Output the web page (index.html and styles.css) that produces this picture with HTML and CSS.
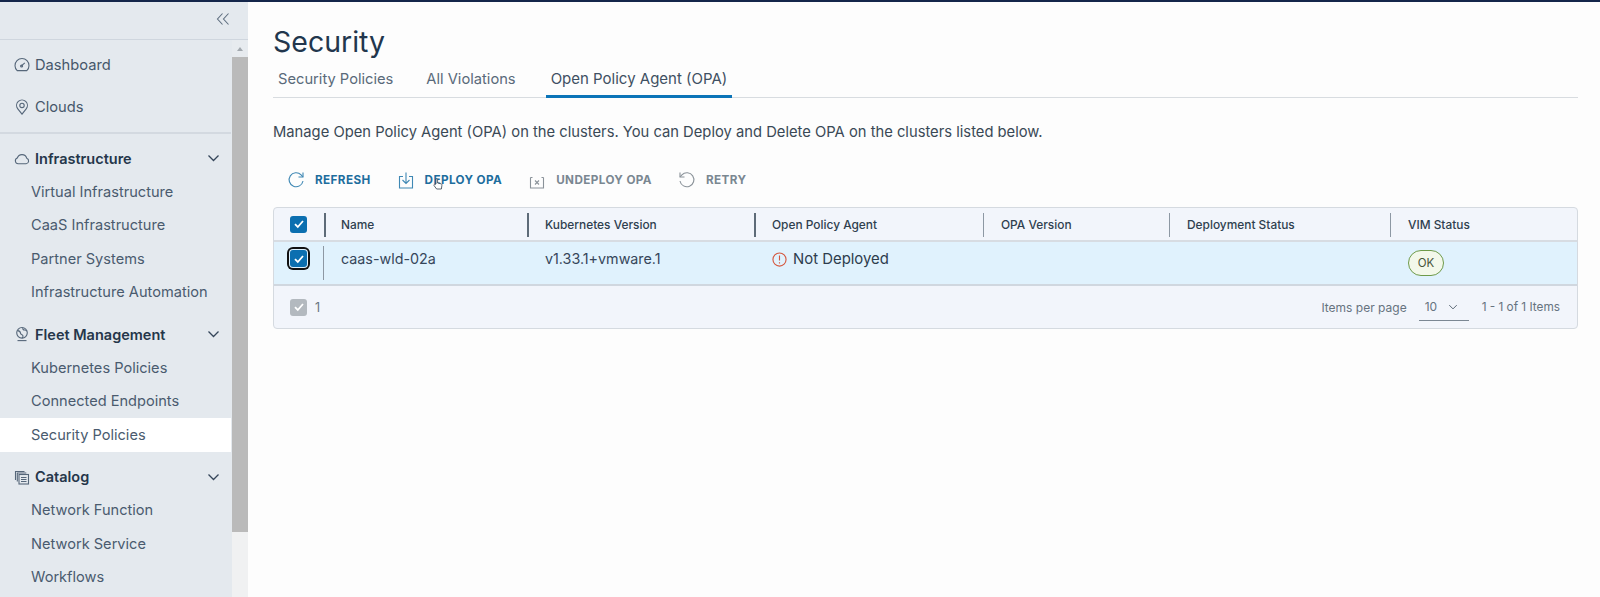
FILE: index.html
```html
<!DOCTYPE html>
<html lang="en">
<head>
<meta charset="utf-8">
<title>Security</title>
<link rel="stylesheet" href="styles.css">
</head>
<body>
<div class="app">
  <aside class="sidebar">
    <div class="collapse">
      <svg class="ic-collapse" viewBox="0 0 14 14"><path d="M6.5 1.5 1.5 7l5 5.5M12.5 1.5 7.5 7l5 5.5"/></svg>
    </div>
    <div class="nav-wrap">
      <nav class="nav">
        <div class="group top">
          <div class="item"><svg class="ic" viewBox="0 0 16 16"><path d="M3.2 13.6a7 7 0 1 1 9.6 0z"/><path d="M6.8 9.4 10.8 5.800"/><circle cx="7.6" cy="9" r="1"/></svg>Dashboard</div>
          <div class="item"><svg class="ic" viewBox="0 0 16 16"><path d="M8 15.200 3.800 9.800a5.400 5.400 0 1 1 8.400 0z"/><circle cx="8" cy="6.400" r="2.200"/></svg>Clouds</div>
        </div>
        <div class="group">
          <div class="head"><svg class="ic" viewBox="0 0 16 16"><path d="M4.200 13.800a3 3 0 0 1-.9-5.800 4.900 4.900 0 0 1 9.400.2 2.900 2.900 0 0 1-.6 5.600z"/></svg><span class="grow">Infrastructure</span><svg class="chev" viewBox="0 0 12 8"><path d="M1 1.500 6 6.500l5-5"/></svg></div>
          <div class="sub">Virtual Infrastructure</div>
          <div class="sub">CaaS Infrastructure</div>
          <div class="sub">Partner Systems</div>
          <div class="sub">Infrastructure Automation</div>
        </div>
        <div class="group">
          <div class="head"><svg class="ic" viewBox="0 0 16 16"><circle cx="8" cy="6.800" r="5.300"/><path d="M3.500 4.600c2 .2 3 1.200 3 2.600s2 1 2.400 2.400-.3 2-.8 2.400M9 1.700c-.6 1.300.2 2.300 1.600 2.300s2 .6 2.500 1.300"/><path d="M3.500 14.600h9"/></svg><span class="grow">Fleet Management</span><svg class="chev" viewBox="0 0 12 8"><path d="M1 1.500 6 6.500l5-5"/></svg></div>
          <div class="sub">Kubernetes Policies</div>
          <div class="sub">Connected Endpoints</div>
          <div class="sub active">Security Policies</div>
        </div>
        <div class="group">
          <div class="head"><svg class="ic" viewBox="0 0 16 16"><path d="M1.500 11V2.500h9"/><path d="M3.300 12.500V4h9"/><rect x="5" y="5.500" width="9.500" height="9.500"/><path d="M7 8.500h5.500M7 10.500h5.500M7 12.500h5.500"/></svg><span class="grow">Catalog</span><svg class="chev" viewBox="0 0 12 8"><path d="M1 1.500 6 6.500l5-5"/></svg></div>
          <div class="sub">Network Function</div>
          <div class="sub">Network Service</div>
          <div class="sub">Workflows</div>
        </div>
      </nav>
      <div class="scrollbar">
        <div class="arrow"></div>
        <div class="thumb"></div>
      </div>
    </div>
  </aside>
  <main class="main">
    <h1 class="title">Security</h1>
    <div class="tabs">
      <a class="tab">Security Policies</a>
      <a class="tab">All Violations</a>
      <a class="tab on">Open Policy Agent (OPA)</a>
    </div>
    <p class="desc">Manage Open Policy Agent (OPA) on the clusters. You can Deploy and Delete OPA on the clusters listed below.</p>
    <div class="toolbar">
      <button class="act"><svg class="tic" viewBox="0 0 18 18"><path d="M16 10a7 7 0 1 1-1.900-6.200L16 6"/><path d="M16 1.500V6h-4.500"/></svg>REFRESH</button>
      <button class="act"><svg class="tic" viewBox="0 0 18 18"><path d="M6 5.500H2.500v11.500h13V5.500H12"/><path d="M9 1.500v11M5.500 9 9 12.500 12.500 9"/></svg><span>DEPLOY OPA</span><svg class="cursor" viewBox="0 0 10 12"><path d="M3 6V1.500a.8.8 0 0 1 1.600 0V5l3.400.8c.8.200 1 .8.900 1.500L8.400 11H3.600L1 7.500c-.5-.8.500-1.500 1.200-.9z"/></svg></button>
      <button class="act off"><svg class="tic" viewBox="0 0 18 18"><path d="M2.500 6.500v10.500h13V6.500"/><path d="M2.500 6.500h2M15.500 6.500h-2"/><path d="M7 9.500l4 4M11 9.500l-4 4"/></svg>UNDEPLOY OPA</button>
      <button class="act off"><svg class="tic" viewBox="0 0 18 18"><path d="M2 10a7 7 0 1 0 1.900-6.200L2 6"/><path d="M2 1.500V6h4.500"/></svg>RETRY</button>
    </div>
    <div class="grid">
      <div class="row hdr">
        <div class="c sel"><span class="box"><svg viewBox="0 0 12 10"><path d="M2 5.200 4.800 8 10 2"/></svg></span></div>
        <div class="c name">Name</div>
        <div class="c ver">Kubernetes Version</div>
        <div class="c opa">Open Policy Agent</div>
        <div class="c opv">OPA Version</div>
        <div class="c dep">Deployment Status</div>
        <div class="c vim">VIM Status</div>
      </div>
      <div class="row body">
        <div class="c sel"><span class="box focus"><svg viewBox="0 0 12 10"><path d="M2 5.200 4.800 8 10 2"/></svg></span></div>
        <div class="c name">caas-wld-02a</div>
        <div class="c ver">v1.33.1+vmware.1</div>
        <div class="c opa"><svg class="err" viewBox="0 0 16 16"><circle cx="8" cy="8" r="7"/><path d="M8 3.800v5.200M8 11v1.200"/></svg><span class="nd">Not Deployed</span></div>
        <div class="c opv"></div>
        <div class="c dep"></div>
        <div class="c vim"><span class="ok">OK</span></div>
      </div>
      <div class="foot">
        <span class="box grey"><svg viewBox="0 0 12 10"><path d="M2 5.200 4.800 8 10 2"/></svg></span>
        <span class="count">1</span>
        <span class="grow"></span>
        <span class="ipp">Items per page</span>
        <span class="select">10<svg viewBox="0 0 12 8"><path d="M1 1.500 6 6.500l5-5"/></svg></span>
        <span class="range">1 - 1 of 1 Items</span>
      </div>
    </div>
  </main>
</div>
</body>
</html>
```
FILE: styles.css
```css
* { box-sizing: border-box; }
html, body { margin: 0; height: 100%; overflow: hidden; }
body { font-family: "Inter", "Open Sans", sans-serif; color: #2d3e4f; background: #fdfdfd; }
.app { display: flex; height: 597px; border-top: 2px solid #14264a; }
.sidebar { width: 248px; flex: none; background: #e4e9ee; display: flex; flex-direction: column; }
.collapse { height: 38px; flex: none; display: flex; justify-content: flex-end; align-items: center; padding: 0 18px 4px 0; border-bottom: 1px solid #cfd6de; }
.ic-collapse { width: 14px; height: 14px; fill: none; stroke: #5f6f80; stroke-width: 1.100; }
.nav-wrap { flex: 1; display: flex; min-height: 0; }
.nav { width: 231px; flex: none; overflow: hidden; }
.group { padding-bottom: 8px; }
.group.top { padding: 4px 0 4px; border-bottom: 2px solid #d3d9e0; margin-bottom: 7px; }
.item { height: 42px; display: flex; align-items: center; padding-left: 14px; font-size: 14.700px; color: #46576a; }
.head { height: 34px; display: flex; align-items: center; padding: 0 11px 0 14px; font-size: 14.500px; font-weight: 600; color: #25364a; }
.sub { height: 33.500px; display: flex; align-items: center; padding-left: 31px; font-size: 14.600px; color: #4a5b6e; }
.sub.active { background: #fff; }
.grow { flex: 1; }
.ic { width: 16px; height: 16px; margin-right: 5px; flex: none; fill: none; stroke: #56677a; stroke-width: 1.100; }
.chev { width: 13px; height: 8px; fill: none; stroke: #35465a; stroke-width: 1.300; }
.scrollbar { width: 16px; margin-left: 1px; background: #f0f1f2; display: flex; flex-direction: column; }
.arrow { height: 17px; display: flex; align-items: center; justify-content: center; background: #e7ebef; }
.arrow::before { content: ""; border: 3.500px solid transparent; border-bottom: 4px solid #a3a9af; border-top: 0; }
.thumb { height: 475px; background: #bababa; }
.main { flex: 1; padding: 0 22px 0 25px; min-width: 0; }
.title { margin: 22px 0 0; font-size: 28.500px; line-height: 36px; font-weight: 400; color: #22364d; }
.tabs { display: flex; margin-top: 1px; height: 37px; border-bottom: 1px solid #d8dce0; gap: 23px; }
.tab { padding: 7px 5px 0; height: 37px; font-size: 14.700px; line-height: 22px; color: #5a6a7a; }
.tab.on { margin-left: 2px; font-size: 15px; color: #3f5062; border-bottom: 3px solid #0b74b8; }
.desc { margin: 23px 0 0; font-size: 14.750px; line-height: 22px; color: #3a4956; }
.toolbar { display: flex; margin-top: 22px; padding-left: 14px; gap: 26px; height: 30px; align-items: center; }
.act { position: relative; display: flex; align-items: center; background: none; border: 0; padding: 0; font: 700 11.700px "Inter", sans-serif; letter-spacing: .4px; color: #1d6d9d; }
.act.off { color: #7a8791; }
.tic { width: 18px; height: 18px; margin-right: 10px; fill: none; stroke: #3f88b4; stroke-width: 1.100; }
.act.off .tic { stroke: #8a9299; }
.cursor { position: absolute; left: 36px; top: 7px; width: 10px; height: 12px; fill: #fff; stroke: #33404c; stroke-width: .8; }
.grid { margin-top: 12px; border: 1px solid #d5dae0; border-radius: 4px; background: #f2f5fb; overflow: hidden; }
.row { display: flex; }
.hdr { height: 34px; border-bottom: 2px solid #d7dce2; font-size: 11.900px; font-weight: 500; color: #2f3f4f; }
.body { height: 44px; background: #e0f2fd; border-bottom: 2px solid #d0d7df; font-size: 14.300px; color: #36465a; }
.c { position: relative; padding: 0 16px 0 18px; display: flex; align-items: center; }
.hdr .c + .c::before { content: ""; position: absolute; left: 0; top: 5px; height: 24px; width: 1px; background: #8d98a3; }
.hdr .name::before, .hdr .ver::before, .hdr .opa::before { width: 2px !important; background: #5e6b78 !important; }
.body .sel::after { content: ""; position: absolute; right: 0; top: 4px; height: 34px; width: 1px; background: #8d98a3; }
.body .c { align-items: flex-start; padding-top: 7px; line-height: 20px; }
.sel { width: 50px; padding: 0 0 0 16px !important; }
.body .sel { padding-top: 8px !important; }
.c.name { width: 203px; padding-left: 17px; }
.ver { width: 227px; }
.opa { width: 229px; }
.opv { width: 186px; }
.dep { width: 221px; }
.vim { flex: 1; }
.box { width: 17px; height: 17px; border-radius: 3px; background: #0b6fb0; display: inline-flex; align-items: center; justify-content: center; flex: none; }
.box svg { width: 12px; height: 10px; fill: none; stroke: #fff; stroke-width: 1.800; }
.box.focus { box-shadow: 0 0 0 1px #e0f2fd, 0 0 0 3px #111; }
.box.grey { background: #b3b9bf; }
.err { width: 15px; height: 15px; margin: 3px 6px 0 0; flex: none; fill: none; stroke: #d5583f; stroke-width: 1.200; }
.nd { font-size: 14.900px; color: #2e3d4d; }
.ok { width: 36px; height: 26px; margin-top: 1px; border: 1px solid #6e9a4a; border-radius: 13px; background: #f3f8ea; display: flex; align-items: center; justify-content: center; font-size: 11.500px; color: #47553a; }
.foot { height: 42px; display: flex; align-items: center; padding: 0 17px 0 16px; font-size: 12px; color: #66737f; }
.count { margin-left: 8px; font-size: 12.500px; }
.select { width: 50px; height: 28px; margin: 0 13px 0 12px; padding: 0 0 0 6px; display: flex; align-items: center; gap: 11px; border-bottom: 1px solid #7b8793; }
.select svg { width: 10px; height: 6px; fill: none; stroke: #4c5a68; stroke-width: 1.200; }
.range { font-size: 11.800px; }
```
